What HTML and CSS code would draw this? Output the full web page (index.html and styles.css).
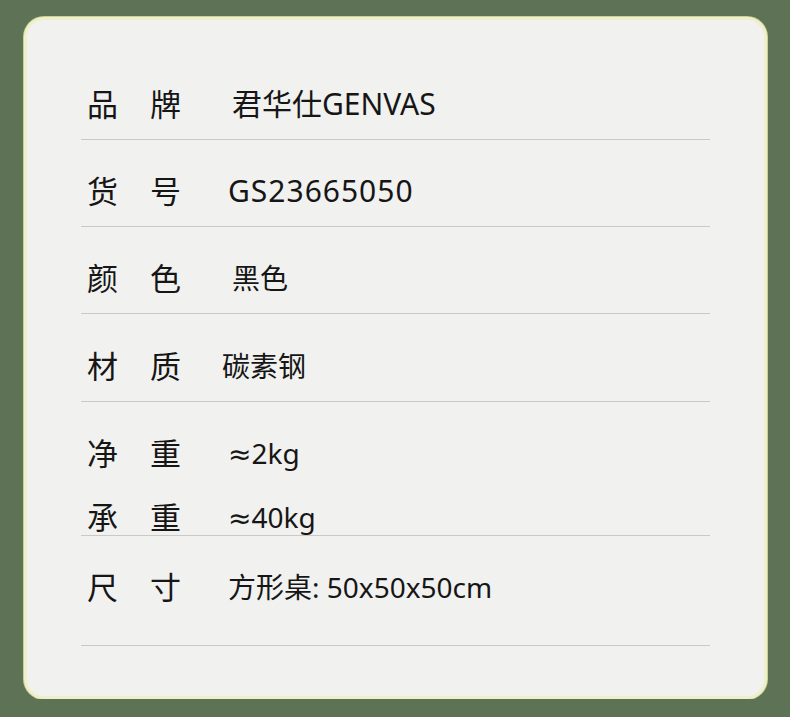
FILE: index.html
```html
<!DOCTYPE html>
<html lang="zh-CN">
<head>
  <meta charset="UTF-8">
  <title>产品参数</title>
  <link rel="stylesheet" href="styles.css">
</head>
<body>

  <div class="spec-card">
    <div class="spec-row">
      <div class="label"><span>品</span><span>牌</span></div>
      <div class="value large shift-r">君华仕GENVAS</div>
    </div>
    <div class="spec-row">
      <div class="label"><span>货</span><span>号</span></div>
      <div class="value large code">GS23665050</div>
    </div>
    <div class="spec-row">
      <div class="label"><span>颜</span><span>色</span></div>
      <div class="value shift-r">黑色</div>
    </div>
    <div class="spec-row material">
      <div class="label"><span>材</span><span>质</span></div>
      <div class="value shift-l">碳素钢</div>
    </div>
    <div class="spec-row weight">
      <div class="label"><span>净</span><span>重</span></div>
      <div class="value">≈2kg</div>
      <div class="label"><span>承</span><span>重</span></div>
      <div class="value">≈40kg</div>
    </div>
    <div class="spec-row size">
      <div class="label"><span>尺</span><span>寸</span></div>
      <div class="value">方形桌: 50x50x50cm</div>
    </div>
  </div>

</body>
</html>
```

FILE: styles.css
```css
body {
  margin: 0;
  background: #5e7356;
  font-family: "Noto Sans", "DejaVu Sans", "Noto Sans CJK SC", sans-serif;
  color: #161616;
}

.spec-card {
  width: 629px;
  height: 643px;
  margin: 17px 0 0 24px;
  padding: 33px 54px 0;
  background: #f1f1f0;
  border: 3px solid #eef0cc;
  border-radius: 20px;
  box-shadow: 0 0 0 1px #c9cf95;
}

.spec-row {
  display: grid;
  grid-template-columns: 141px 1fr;
  align-items: center;
  padding: 36px 0 20px 6px;
  border-bottom: 1px solid #c9c9c9;
  line-height: 30px;
}

.label {
  display: flex;
  gap: 32px;
  font-size: 31px;
}

.value {
  font-size: 28px;
}

.large {
  font-size: 30px;
}

.code {
  letter-spacing: 1px;
}

.shift-r {
  margin-left: 4px;
}

.shift-l {
  margin-left: -6px;
}

.material {
  padding-top: 37px;
}

.weight {
  row-gap: 34px;
  padding-bottom: 3px;
}

.size {
  padding-bottom: 43px;
}
```
